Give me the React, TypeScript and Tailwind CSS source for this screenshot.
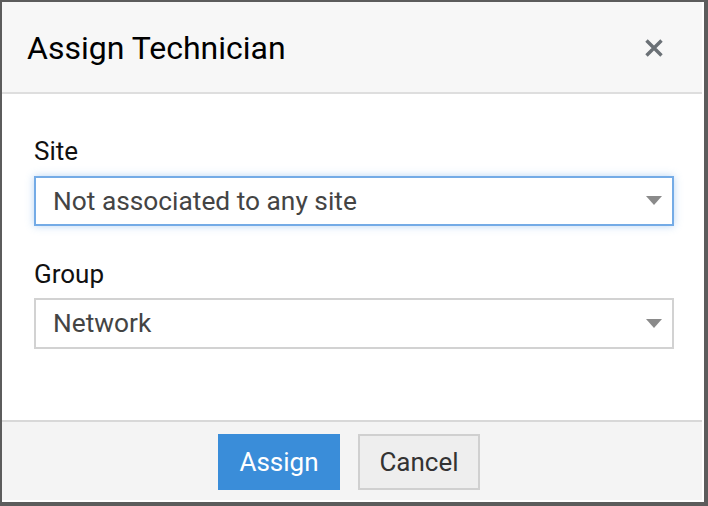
import React from "react";

function Caret() {
  return (
    <svg width="16" height="10" viewBox="0 0 16 10" className="shrink-0">
      <path d="M0 0 L16 0 L8 9 Z" fill="#8a8a8a" />
    </svg>
  );
}

export default function App() {
  return (
    <div
      className="w-[708px] h-[506px] bg-[#5c5c5c] pl-[2px] pt-[2px] pr-[4px] pb-[4px]"
      style={{ fontFamily: "Roboto, 'Liberation Sans', sans-serif" }}
    >
      <div className="w-full h-full bg-white flex flex-col pr-[2px] pb-[2px]">
        <div className="h-[92px] bg-[#f7f7f7] flex items-center justify-between pl-[25px] pr-[38px] pt-[2px] border-b-2 border-[#dedede]">
          <div className="text-[32px] text-black leading-none">Assign Technician</div>
          <svg width="20" height="20" viewBox="0 0 20 20">
            <path d="M2.5 2.5 L17.5 17.5 M17.5 2.5 L2.5 17.5" stroke="#6b7176" strokeWidth="3.4" strokeLinecap="butt" />
          </svg>
        </div>
        <div className="flex-1 flex flex-col pl-[32px] pr-[28px] pt-[44px]">
          <div className="text-[26px] text-[#111] leading-none">Site</div>
          <div className="mt-[12px] h-[50px] border-2 border-[#74abe6] shadow-[0_0_8px_rgba(102,165,230,0.45)] flex items-center justify-between pl-[17px] pr-[10px]">
            <span className="text-[26.3px] text-[#444] leading-none">Not associated to any site</span>
            <Caret />
          </div>
          <div className="mt-[35px] text-[26px] text-[#111] leading-none">Group</div>
          <div className="mt-[11px] h-[51px] border-2 border-[#d2d2d2] flex items-center justify-between pl-[17px] pr-[10px]">
            <span className="text-[26.3px] text-[#444] leading-none">Network</span>
            <Caret />
          </div>
        </div>
        <div className="h-[80px] border-t-2 border-[#d8d8d8] bg-[#f4f4f4] flex justify-center items-start pt-[12px] pr-[6px] gap-[18px]">
          <button className="w-[122px] h-[56px] bg-[#3a8dd9] text-white text-[26px]">Assign</button>
          <button className="w-[122px] h-[56px] bg-[#eeeeee] border-2 border-[#d0d0d0] text-[#333] text-[26px]">Cancel</button>
        </div>
      </div>
    </div>
  );
}
